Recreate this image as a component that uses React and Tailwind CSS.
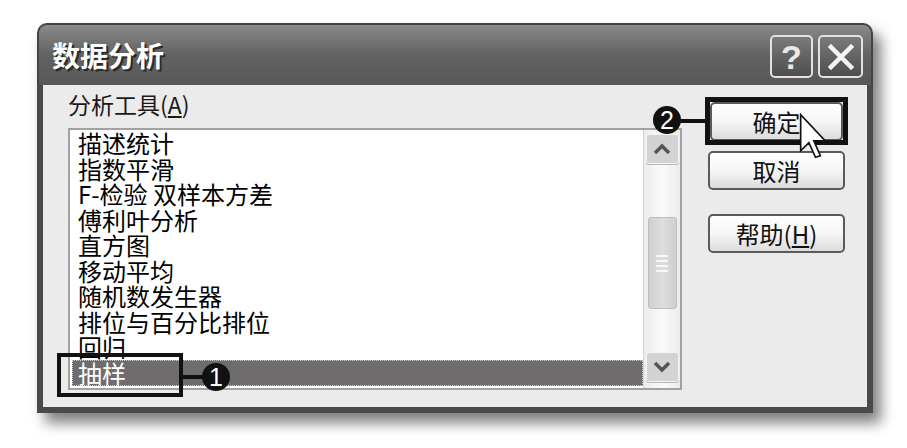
import React from 'react'

const cjk = { fontFamily: '"Noto Sans CJK SC", "Noto Sans", sans-serif' }

const items = [
  '描述统计',
  '指数平滑',
  'F-检验 双样本方差',
  '傅利叶分析',
  '直方图',
  '移动平均',
  '随机数发生器',
  '排位与百分比排位',
  '回归',
]

function Chevron({ up }) {
  return (
    <svg width="18" height="12" viewBox="0 0 18 12">
      <polyline
        points={up ? '2,10 9,3 16,10' : '2,2 9,9 16,2'}
        fill="none"
        stroke="#555"
        strokeWidth="3.5"
      />
    </svg>
  )
}

function Scrollbar() {
  return (
    <div className="w-[37px] h-full flex flex-col items-center border-l border-[#d4d4d4] bg-linear-to-r from-[#ececec] via-[#fafafa] to-[#ececec] px-[2px]">
      <div className="mt-[4px] w-[33px] h-[30px] flex items-center justify-center rounded-[3px] border border-[#f4f4f4] bg-[#d3d3d3] shadow-[0_1px_0_#b8b8b8]">
        <Chevron up />
      </div>
      <div className="mt-[53px] w-[29px] h-[92px] flex flex-col items-center justify-center gap-[3px] rounded-[3px] border border-[#bdbdbd] bg-linear-to-r from-[#d0d0d0] via-[#dedede] to-[#cfcfcf]">
        <div className="w-[12px] h-[2px] bg-[#f8f8f8]" />
        <div className="w-[12px] h-[2px] bg-[#f8f8f8]" />
        <div className="w-[12px] h-[2px] bg-[#f8f8f8]" />
        <div className="w-[12px] h-[2px] bg-[#f8f8f8]" />
      </div>
      <div className="flex-1" />
      <div className="mb-[6px] w-[33px] h-[30px] flex items-center justify-center rounded-[3px] border border-[#f4f4f4] bg-[#d3d3d3] shadow-[0_1px_0_#b8b8b8]">
        <Chevron />
      </div>
    </div>
  )
}

function DlgButton({ children, className = '' }) {
  return (
    <div
      className={`h-[39px] flex items-center justify-center rounded-[5px] border-2 border-[#5a5a5a] bg-linear-to-b from-white via-[#f6f6f6] to-[#dcdcdc] text-[24px] leading-none text-[#111] ${className}`}
      style={cjk}
    >
      {children}
    </div>
  )
}

function Badge({ n }) {
  return (
    <div
      className="w-[28px] h-[28px] rounded-full bg-[#111] flex items-center justify-center text-white text-[25px] leading-none"
      style={{ fontFamily: '"Liberation Sans", Arial, sans-serif' }}
    >
      {n}
    </div>
  )
}

export default function App() {
  return (
    <div className="w-[907px] h-[448px] bg-white pt-[23px] pl-[37px] overflow-hidden">
      <div className="w-[836px] h-[390px] flex flex-col shadow-[8px_10px_14px_rgba(0,0,0,0.5)] rounded-t-[10px]">
        {/* title bar */}
        <div className="h-[62px] flex items-start justify-between rounded-t-[10px] border-2 border-b-0 border-[#444] bg-linear-to-b from-[#8a8a8a] via-[#626262] to-[#585858] pl-[13px] pr-[8px]">
          <div
            className="mt-[16px] text-[28px] leading-[28px] font-bold text-white [text-shadow:2px_2px_0_#2a2a2a]"
            style={cjk}
          >
            数据分析
          </div>
          <div className="mt-[10px] flex gap-[5px]">
            <div
              className="w-[43px] h-[43px] rounded-[5px] border-2 border-[#e2e2e2] bg-linear-to-b from-[#7a7a7a] to-[#4e4e4e] flex items-center justify-center text-[34px] leading-none font-bold text-[#e8e8e8]"
              style={{ fontFamily: '"Liberation Sans", Arial, sans-serif' }}
            >
              ?
            </div>
            <div className="w-[45px] h-[43px] rounded-[5px] border-2 border-[#e2e2e2] bg-linear-to-b from-[#7a7a7a] to-[#4e4e4e] flex items-center justify-center">
              <svg width="26" height="26" viewBox="0 0 26 26">
                <path d="M3 3 L23 23 M23 3 L3 23" stroke="#f4f4f4" strokeWidth="4.5" strokeLinecap="square" />
              </svg>
            </div>
          </div>
        </div>

        {/* body */}
        <div className="relative flex-1 flex border-x-[6px] border-b-[6px] border-[#4a4a4a] bg-[#ebebeb]">
          <div className="pl-[25px] pt-[5px] flex flex-col">
            <div className="h-[38px] text-[23px] leading-[28px] text-[#1a1a1a]" style={cjk}>
              分析工具(<span className="underline">A</span>)
            </div>
            <div className="w-[614px] h-[262px] border-2 border-[#a2a2a2] bg-white flex">
              <div className="flex-1 flex flex-col" style={cjk}>
                {items.map((t) => (
                  <div key={t} className="h-[25.5px] leading-[25.5px] pl-[8px] text-[24px] text-black whitespace-pre">
                    {t}
                  </div>
                ))}
                <div className="ml-[2px] h-[26px] leading-[24px] pl-[5px] text-[24px] text-white bg-[#6e6c6d] border border-dotted border-[#cfcfcf]">
                  抽样
                </div>
              </div>
              <Scrollbar />
            </div>
          </div>

          <div className="ml-[26px] pt-[17px] flex flex-col">
            <DlgButton className="w-[133px] ml-[2px]">确定</DlgButton>
            <DlgButton className="w-[137px] mt-[10px]">取消</DlgButton>
            <DlgButton className="w-[137px] mt-[24px]">
              帮助(<span className="underline">H</span>)
            </DlgButton>
          </div>

          {/* annotation 1 */}
          <div className="absolute left-[14px] top-[268px] w-[126px] h-[44px] border-[4px] border-[#111]" />
          <div className="absolute left-[140px] top-[290px] w-[24px] h-[4px] bg-[#111]" />
          <div className="absolute left-[159px] top-[278px]">
            <Badge n="1" />
          </div>

          {/* annotation 2 */}
          <div className="absolute left-[662px] top-[12px] w-[143px] h-[48px] border-[5px] border-[#111]" />
          <div className="absolute left-[636px] top-[34px] w-[28px] h-[4px] bg-[#111]" />
          <div className="absolute left-[610px] top-[21px]">
            <Badge n="2" />
          </div>

          {/* mouse cursor */}
          <svg className="absolute left-[756px] top-[28px]" width="28" height="46" viewBox="0 0 17 28">
            <path d="M1 1 L1 23 L6 18 L10 27 L13 26 L9 17 L16 17 Z" fill="white" stroke="#111" strokeWidth="1" strokeLinejoin="miter" />
          </svg>
        </div>
      </div>
    </div>
  )
}
